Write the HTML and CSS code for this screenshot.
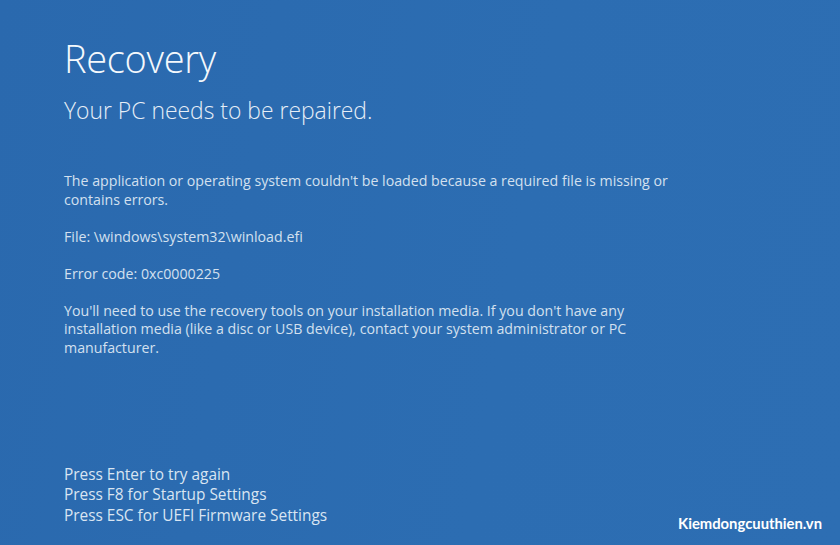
FILE: index.html
```html
<!DOCTYPE html>
<html>
<head>
<meta charset="utf-8">
<link rel="stylesheet" href="styles.css">
</head>
<body>
<div class="screen">
  <main class="content">
    <h1 class="title">Recovery</h1>
    <h2 class="subtitle">Your PC needs to be repaired.</h2>
    <p class="text gap-lg">The application or operating system couldn't be loaded because a required file is missing or<br>contains errors.</p>
    <p class="text">File: \windows\system32\winload.efi</p>
    <p class="text">Error code: 0xc0000225</p>
    <p class="text">You'll need to use the recovery tools on your installation media. If you don't have any<br>installation media (like a disc or USB device), contact your system administrator or PC<br>manufacturer.</p>
  </main>
  <footer class="footer">
    <div class="keys">
      <div>Press Enter to try again</div>
      <div>Press F8 for Startup Settings</div>
      <div>Press ESC for UEFI Firmware Settings</div>
    </div>
    <div class="brand">Kiemdongcuuthien.vn</div>
  </footer>
</div>
</body>
</html>
```

FILE: styles.css
```css
html, body {
  margin: 0;
  padding: 0;
}
body {
  width: 840px;
  height: 545px;
  overflow: hidden;
  background: #2b6cb1;
  font-family: "Open Sans", "Noto Sans", sans-serif;
  color: #d9e5f2;
}
.screen {
  width: 840px;
  height: 545px;
  display: flex;
  flex-direction: column;
  justify-content: space-between;
  background: linear-gradient(100deg, #2a69ae 0%, #2c6db2 60%, #2d6eb3 100%);
}
.content {
  padding: 30px 0 0 64px;
}
.title {
  margin: 0;
  font-size: 38px;
  font-weight: 300;
  color: #f4f8fc;
  line-height: 56px;
  letter-spacing: -0.3px;
}
.subtitle {
  margin: 10px 0 0 0;
  font-size: 22.9px;
  font-weight: 300;
  color: #e6eef7;
  line-height: 30px;
}
.text {
  margin: 18.5px 0 0 0;
  font-size: 14.2px;
  font-weight: 400;
  line-height: 18.5px;
  color: #d3e0ef;
}
.gap-lg {
  margin-top: 46px;
}
.footer {
  display: flex;
  justify-content: space-between;
  align-items: flex-end;
  padding: 0 18px 13px 64px;
}
.keys {
  font-size: 15.4px;
  line-height: 20.5px;
  color: #d9e5f2;
  padding-bottom: 6px;
}
.brand {
  font-family: "Lato", "Open Sans", sans-serif;
  font-weight: 700;
  font-size: 14.8px;
  color: #ffffff;
}
```
